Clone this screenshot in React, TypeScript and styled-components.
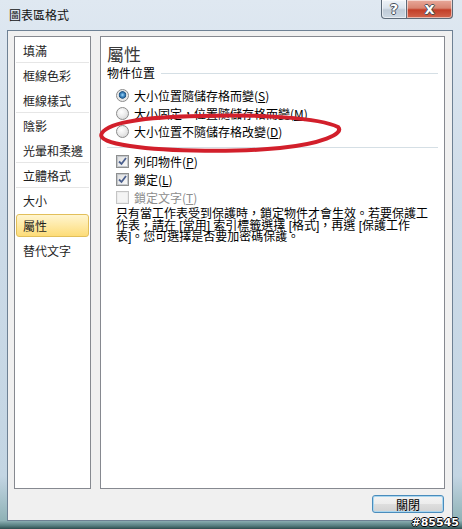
import React from "react";
import styled, { createGlobalStyle } from "styled-components";

const GlobalStyle = createGlobalStyle`
  html, body {
    margin: 0;
    padding: 0;
    background: #fff;
  }
  body {
    font-family: "Noto Sans CJK TC", "Noto Sans", sans-serif;
  }
`;

const Window = styled.div`
  position: relative;
  width: 462px;
  height: 529px;
  box-sizing: border-box;
  padding: 0 9px 8px 7px;
  display: flex;
  flex-direction: column;
  background: linear-gradient(
    to bottom,
    #dfe8f1 0%,
    #cddbe8 40%,
    #c3d5e3 90%,
    #8fb2b6 98.4%,
    #547c7e 99.4%,
    #2e4c4e 100%
  );
  font-family: "Noto Sans CJK TC", "Noto Sans", sans-serif;
  font-size: 12px;
  color: #000;
  overflow: hidden;
`;

const TitleBar = styled.div`
  height: 30px;
  flex: none;
  display: flex;
  align-items: flex-start;
  justify-content: space-between;
`;

const Title = styled.div`
  padding: 7px 0 0 2px;
  font-size: 12px;
  line-height: 16px;
  color: #111;
`;

const CaptionButtons = styled.div`
  display: flex;
`;

const CaptionButton = styled.div<{ $close?: boolean }>`
  width: ${(p) => (p.$close ? 46 : 26)}px;
  height: 19px;
  box-sizing: border-box;
  display: flex;
  align-items: center;
  justify-content: center;
  border: 1px solid #5d6b79;
  border-top: none;
  border-left: ${(p) => (p.$close ? "none" : "1px solid #5d6b79")};
  border-radius: ${(p) => (p.$close ? "0 0 4px 0" : "0 0 0 4px")};
  background: ${(p) =>
    p.$close
      ? "linear-gradient(to bottom, #e8a99b 0%, #d88572 45%, #c23e28 55%, #d2654c 100%)"
      : "linear-gradient(to bottom, #eef3f8 0%, #dbe4ed 45%, #bfcbd7 55%, #cdd9e4 100%)"};
  box-shadow: inset 0 0 0 1px rgba(255, 255, 255, 0.55);
  color: #fff;
  font-family: "DejaVu Sans", sans-serif;
  font-weight: bold;
  font-size: ${(p) => (p.$close ? 13 : 14)}px;
  line-height: 1;
  text-shadow: -1px 0 #46505a, 1px 0 #46505a, 0 -1px #46505a, 0 1px #46505a;
`;

const Client = styled.div`
  flex: 1;
  display: flex;
  flex-direction: column;
  background: #f0f0f0;
  border: 1px solid #6e8194;
  padding: 5px 7px 0 6px;
`;

const Body = styled.div`
  height: 453px;
  display: flex;
  gap: 9px;
`;

const Sidebar = styled.div`
  width: 77px;
  box-sizing: border-box;
  border: 1px solid #868990;
  background: #fff;
  padding: 1px;
`;

const NavItem = styled.div<{ $divider?: boolean; $selected?: boolean }>`
  box-sizing: border-box;
  height: ${(p) => (p.$selected ? 23 : 25)}px;
  margin: ${(p) => (p.$selected ? "1px 0" : "0")};
  display: flex;
  align-items: center;
  padding-left: 7px;
  font-size: 12px;
  color: #1e1e1e;
  border-bottom: ${(p) => (p.$divider ? "1px solid #e6e6e6" : "none")};
  ${(p) =>
    p.$selected &&
    `
    padding-left: 6px;
    border: 1px solid #e2bf5a;
    border-radius: 3px;
    background: linear-gradient(to bottom, #fff5cf 0%, #fee9a5 50%, #fddc78 100%);
  `}
`;

const Panel = styled.div`
  position: relative;
  flex: 1;
  box-sizing: border-box;
  border: 1px solid #868990;
  background: #fff;
  padding: 7px 6px 0 6px;
`;

const Heading = styled.div`
  font-size: 17px;
  line-height: 20px;
  color: #3a3a3a;
`;

const GroupLabel = styled.div`
  margin-top: 1px;
  display: flex;
  align-items: center;
  gap: 6px;
  line-height: 16px;
  &::after {
    content: "";
    flex: 1;
    height: 1px;
    background: #d5dfe5;
  }
`;

const Options = styled.div<{ $top: number }>`
  margin-top: ${(p) => p.$top}px;
  display: flex;
  flex-direction: column;
`;

const OptionRow = styled.div<{ $disabled?: boolean }>`
  height: 18px;
  display: flex;
  align-items: center;
  gap: 5px;
  padding-left: 9px;
  color: ${(p) => (p.$disabled ? "#8d8d8d" : "#000")};
`;

const Radio = styled.span<{ $checked?: boolean }>`
  width: 13px;
  height: 13px;
  box-sizing: border-box;
  border-radius: 50%;
  border: 1px solid #8b8b8b;
  background: ${(p) =>
    p.$checked
      ? "radial-gradient(circle at 50% 45%, #a6dcf7 0, #4b94cf 1.6px, #1f5686 3.4px, #e6e6e6 4.1px, #f3f3f3 100%)"
      : "radial-gradient(circle at 40% 35%, #ffffff 0, #ececec 45%, #cfcfcf 100%)"};
`;

const Check = styled.span<{ $disabled?: boolean }>`
  width: 13px;
  height: 13px;
  box-sizing: border-box;
  display: flex;
  align-items: center;
  justify-content: center;
  border: 1px solid ${(p) => (p.$disabled ? "#c5c5c5" : "#8e8f8f")};
  background: ${(p) =>
    p.$disabled
      ? "#f4f4f4"
      : "linear-gradient(135deg, #dcdcdc 0%, #f0f0f0 60%, #fbfbfb 100%)"};
  box-shadow: inset 0 0 0 1px ${(p) => (p.$disabled ? "#ececec" : "#c3c7cc")};
`;

const Key = styled.span`
  text-decoration: underline;
`;

const Rule = styled.div`
  height: 1px;
  background: #d5dfe5;
  margin: 7px 0 4px;
`;

const Note = styled.div`
  margin-top: 3px;
  padding-left: 9px;
  display: flex;
  flex-direction: column;
  font-family: "Liberation Sans", "Noto Sans CJK TC", sans-serif;
  font-size: 12px;
  color: #000;
`;

const NoteLine = styled.div`
  height: 11.5px;
  line-height: 11.5px;
  white-space: nowrap;
`;

const Mark = styled.svg`
  position: absolute;
  left: 0;
  top: 0;
  overflow: visible;
  pointer-events: none;
`;

const Footer = styled.div`
  height: 31px;
  box-sizing: border-box;
  display: flex;
  justify-content: flex-end;
  align-items: flex-start;
  padding: 6px 1px 0 0;
`;

const Button = styled.div`
  width: 72px;
  height: 18px;
  box-sizing: border-box;
  display: flex;
  align-items: center;
  justify-content: center;
  border: 1px solid #4a8cbc;
  border-radius: 3px;
  background: linear-gradient(to bottom, #f4f4f4 0%, #ececec 50%, #dedede 50%, #d2d2d2 100%);
  box-shadow: inset 0 0 0 1px #a9d6ef;
  font-size: 12px;
  color: #000;
`;

const Watermark = styled.div`
  position: absolute;
  right: 3px;
  bottom: 0;
  font-family: "DejaVu Sans", sans-serif;
  font-weight: bold;
  font-size: 11px;
  line-height: 13px;
  color: #fff;
  text-shadow: -1px 0 #000, 1px 0 #000, 0 -1px #000, 0 1px #000;
`;

const navItems = [
  { label: "填滿", divider: true },
  { label: "框線色彩" },
  { label: "框線樣式", divider: true },
  { label: "陰影" },
  { label: "光暈和柔邊", divider: true },
  { label: "立體格式", divider: true },
  { label: "大小" },
  { label: "屬性", selected: true },
  { label: "替代文字" },
];

const noteLines = [
  "只有當工作表受到保護時，鎖定物件才會生效。若要保護工",
  "作表，請在 [常用] 索引標籤選擇 [格式]，再選 [保護工作",
  "表]。您可選擇是否要加密碼保護。",
];

function CheckMark() {
  return (
    <svg width="9" height="9" viewBox="0 0 9 9">
      <path d="M1 4.5 L3.5 7 L8 1" fill="none" stroke="#4a5f8e" strokeWidth="1.8" />
    </svg>
  );
}

export default function App() {
  return (
    <>
      <GlobalStyle />
      <Window>
        <TitleBar>
          <Title>圖表區格式</Title>
          <CaptionButtons>
            <CaptionButton>?</CaptionButton>
            <CaptionButton $close>X</CaptionButton>
          </CaptionButtons>
        </TitleBar>
        <Client>
          <Body>
            <Sidebar>
              {navItems.map((item) => (
                <NavItem key={item.label} $divider={item.divider} $selected={item.selected}>
                  {item.label}
                </NavItem>
              ))}
            </Sidebar>
            <Panel>
              <Heading>屬性</Heading>
              <GroupLabel>物件位置</GroupLabel>
              <Options $top={5}>
                <OptionRow>
                  <Radio $checked />
                  <span>
                    大小位置隨儲存格而變(<Key>S</Key>)
                  </span>
                </OptionRow>
                <OptionRow>
                  <Radio />
                  <span>
                    大小固定，位置隨儲存格而變(<Key>M</Key>)
                  </span>
                </OptionRow>
                <OptionRow>
                  <Radio />
                  <span>
                    大小位置不隨儲存格改變(<Key>D</Key>)
                  </span>
                </OptionRow>
              </Options>
              <Rule />
              <Options $top={0}>
                <OptionRow>
                  <Check>
                    <CheckMark />
                  </Check>
                  <span>
                    列印物件(<Key>P</Key>)
                  </span>
                </OptionRow>
                <OptionRow>
                  <Check>
                    <CheckMark />
                  </Check>
                  <span>
                    鎖定(<Key>L</Key>)
                  </span>
                </OptionRow>
                <OptionRow $disabled>
                  <Check $disabled />
                  <span>
                    鎖定文字(<Key>T</Key>)
                  </span>
                </OptionRow>
              </Options>
              <Note>
                {noteLines.map((line) => (
                  <NoteLine key={line}>{line}</NoteLine>
                ))}
              </Note>
              <Mark width="250" height="120">
                <path
                  d="M1 96 C 9 84, 49 80, 99 79 C 159 77, 219 81, 237 90 C 244 97, 219 107, 179 111 C 139 115, 69 115, 29 109 C 9 106, -3 102, 1 96 Z"
                  fill="none"
                  stroke="#d21f2b"
                  strokeWidth="4"
                />
              </Mark>
            </Panel>
          </Body>
          <Footer>
            <Button>關閉</Button>
          </Footer>
        </Client>
        <Watermark>#85545</Watermark>
      </Window>
    </>
  );
}
